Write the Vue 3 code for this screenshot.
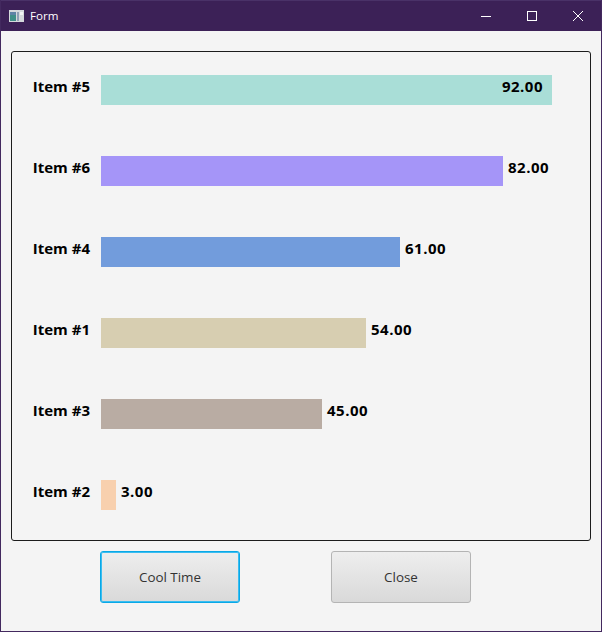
<script setup>
const rows = [
  { name: 'Item #5', value: '92.00', width: 451, color: '#a9ded7', inside: true },
  { name: 'Item #6', value: '82.00', width: 402, color: '#a595f8' },
  { name: 'Item #4', value: '61.00', width: 299, color: '#729cdc' },
  { name: 'Item #1', value: '54.00', width: 265, color: '#d7ceb1' },
  { name: 'Item #3', value: '45.00', width: 221, color: '#b9aca3' },
  { name: 'Item #2', value: '3.00', width: 15, color: '#f8d0ae' }
]
</script>

<template>
  <div class="window">
    <header class="titlebar">
      <svg class="app-icon" width="15" height="12" viewBox="0 0 15 12">
        <rect width="15" height="12" fill="#d5d9dc" />
        <rect x="1" y="2" width="6" height="9" fill="#3f8f88" />
        <rect x="1" y="2" width="6" height="3" fill="#5e83a6" />
        <rect x="8" y="2" width="2" height="9" fill="#8fa0b4" />
        <rect x="11" y="2" width="3" height="3" fill="#f2f4f4" />
      </svg>
      <span class="title">Form</span>
      <div class="controls">
        <svg width="12" height="12" viewBox="0 0 12 12"><path d="M1 6.5h10" stroke="#fff" fill="none" /></svg>
        <svg width="12" height="12" viewBox="0 0 12 12"><rect x="1.5" y="1.5" width="9" height="9" stroke="#fff" fill="none" /></svg>
        <svg width="12" height="12" viewBox="0 0 12 12"><path d="M1 1l10 10M11 1L1 11" stroke="#fff" fill="none" /></svg>
      </div>
    </header>
    <main class="content">
      <section class="chart">
        <div v-for="row in rows" :key="row.name" class="row">
          <span class="label">{{ row.name }}</span>
          <div class="bar" :style="{ width: row.width + 'px', backgroundColor: row.color }">
            <span v-if="row.inside" class="value inside">{{ row.value }}</span>
          </div>
          <span v-if="!row.inside" class="value">{{ row.value }}</span>
        </div>
      </section>
      <div class="buttons">
        <button class="btn focused">Cool Time</button>
        <button class="btn">Close</button>
      </div>
    </main>
  </div>
</template>

<style>
html, body {
  margin: 0;
  background: #f4f4f4;
}
</style>

<style scoped>
.window {
  width: 602px;
  height: 632px;
  box-sizing: border-box;
  border: 1px solid #43295f;
  border-top: 0;
  display: flex;
  flex-direction: column;
  font-family: "Open Sans", "Noto Sans", sans-serif;
  background: #f4f4f4;
}
.titlebar {
  height: 31px;
  box-sizing: border-box;
  flex: none;
  background: #3c2157;
  border-top: 1px solid #4a3268;
  padding-bottom: 1px;
  display: flex;
  align-items: center;
  padding-left: 8px;
  color: #fff;
  font-size: 11.6px;
}
.app-icon {
  margin-right: 6px;
}
.controls {
  margin-left: auto;
  display: flex;
  gap: 34px;
  padding-right: 17px;
}
.content {
  flex: 1;
  padding: 20px 10px 0;
}
.chart {
  width: 580px;
  height: 490px;
  box-sizing: border-box;
  border: 1px solid #1c1c1c;
  border-radius: 3px;
  padding-top: 23px;
  display: flex;
  flex-direction: column;
  gap: 51px;
}
.row {
  height: 30px;
  display: flex;
  align-items: center;
}
.label {
  width: 78px;
  margin-right: 11px;
  text-align: right;
  font-size: 15px;
  font-weight: 700;
  color: #000;
  position: relative;
  top: -4px;
  white-space: nowrap;
}
.bar {
  height: 30px;
  display: flex;
  align-items: center;
  justify-content: flex-end;
}
.value {
  margin-left: 5px;
  font-size: 15px;
  letter-spacing: 0.5px;
  font-weight: 700;
  color: #000;
  position: relative;
  top: -4px;
}
.value.inside {
  margin-left: 0;
  margin-right: 9px;
}
.buttons {
  display: flex;
  gap: 91px;
  padding: 10px 0 0 89px;
}
.btn {
  width: 140px;
  height: 52px;
  box-sizing: border-box;
  border: 1px solid #b4b4b4;
  border-radius: 3px;
  background: linear-gradient(#eeeeee, #d9d9d9);
  font-family: inherit;
  font-size: 13.4px;
  color: #333;
  padding: 0;
}
.btn.focused {
  border-color: #0aa8e6;
  box-shadow: inset 0 0 0 1px #3abdf0;
}
</style>
